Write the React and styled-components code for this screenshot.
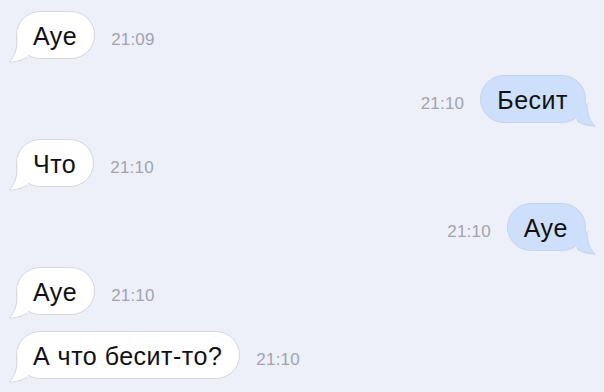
import React from 'react';
import styled, { createGlobalStyle } from 'styled-components';

const GlobalStyle = createGlobalStyle`
  html, body {
    margin: 0;
    padding: 0;
    background: #edf0f9;
  }
  body {
    font-family: "Liberation Sans", Arial, sans-serif;
    -webkit-font-smoothing: antialiased;
  }
`;

const Screen = styled.div`
  width: 604px;
  height: 392px;
  overflow: hidden;
  background: #edf0f9;
  box-sizing: border-box;
  padding: 11px 18px 0 16px;
  display: flex;
  flex-direction: column;
  gap: 16px;
`;

const Row = styled.div`
  display: flex;
  align-items: center;
  justify-content: ${(p) => (p.$out ? 'flex-end' : 'flex-start')};
  gap: 16px;
`;

const Bubble = styled.div`
  position: relative;
  height: 48px;
  box-sizing: border-box;
  padding: 2px 17px 0 16px;
  border-radius: 24px;
  display: flex;
  align-items: center;
  font-size: 25px;
  letter-spacing: 0.5px;
  color: #111;
  background: ${(p) => (p.$out ? '#cddffa' : '#ffffff')};
  border: 1px solid ${(p) => (p.$out ? '#c3d4ee' : '#d4d7de')};
`;

const Tail = styled.svg`
  position: absolute;
  bottom: -5px;
  width: 24px;
  height: 26px;
  ${(p) => (p.$out ? 'right: -11px; transform: scaleX(-1);' : 'left: -9px;')}
`;

const Time = styled.span`
  margin-top: 9px;
  font-size: 17px;
  color: #a0a4ac;
  letter-spacing: 0.2px;
`;

function BubbleTail({ out }) {
  const fill = out ? '#cddffa' : '#ffffff';
  const stroke = out ? '#c3d4ee' : '#d4d7de';
  return (
    <Tail $out={out} viewBox="0 0 24 26">
      <path d="M9 2 C9 12 7 19 1 25 C7 25 13 24 19 20 L22 10 Z" fill={fill} />
      <path d="M9 2 C9 12 7 19 1 25 C7 25 13 24 19 20" fill="none" stroke={stroke} strokeWidth="1" />
    </Tail>
  );
}

const messages = [
  { text: 'Aye', time: '21:09', out: false },
  { text: 'Бесит', time: '21:10', out: true },
  { text: 'Что', time: '21:10', out: false },
  { text: 'Aye', time: '21:10', out: true },
  { text: 'Aye', time: '21:10', out: false },
  { text: 'А что бесит-то?', time: '21:10', out: false },
];

export default function App() {
  return (
    <>
      <GlobalStyle />
      <Screen>
        {messages.map((m, i) => (
          <Row key={i} $out={m.out}>
            {m.out && <Time>{m.time}</Time>}
            <Bubble $out={m.out}>
              <BubbleTail out={m.out} />
              {m.text}
            </Bubble>
            {!m.out && <Time>{m.time}</Time>}
          </Row>
        ))}
      </Screen>
    </>
  );
}
